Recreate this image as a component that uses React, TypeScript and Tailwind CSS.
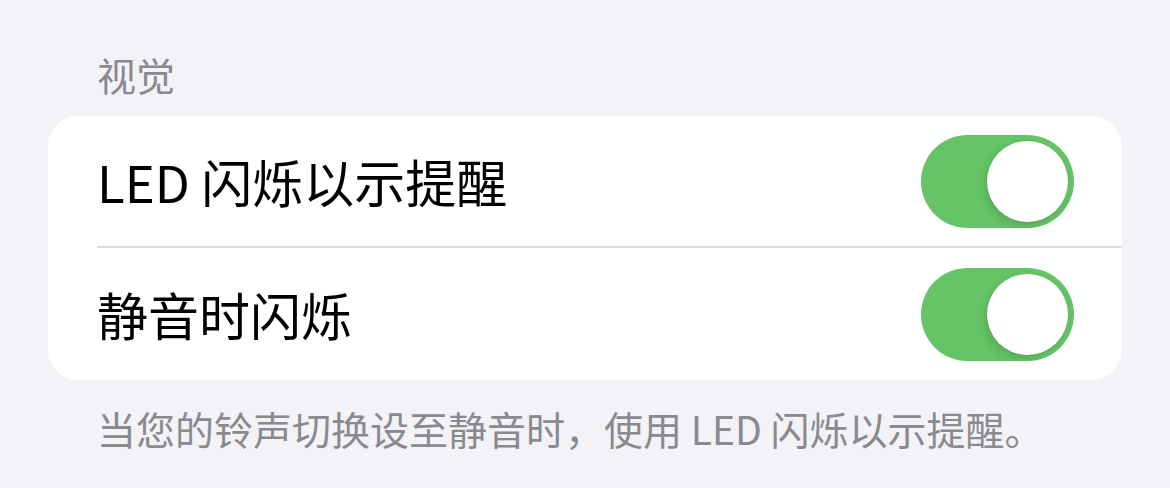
const font = { fontFamily: '"Noto Sans CJK SC", "Noto Sans", sans-serif' }

function Toggle({ on }: { on: boolean }) {
  return (
    <div
      className={`flex h-[93px] w-[153px] shrink-0 items-center rounded-full p-[6px] ${
        on ? 'justify-end bg-[#65c466]' : 'justify-start bg-[#e9e9eb]'
      }`}
    >
      <div className="h-[81px] w-[81px] rounded-full bg-white shadow-[-3px_4px_10px_rgba(0,0,0,0.12),0_1px_2px_rgba(0,0,0,0.06)]" />
    </div>
  )
}

function Row({ label, last }: { label: string; last?: boolean }) {
  return (
    <div className="flex h-[132px] items-center pl-[49px]">
      <div
        className={`flex h-full flex-1 items-center justify-between pr-[48px] ${
          last ? '' : 'border-b-[2px] border-[#dcdcde]'
        }`}
      >
        <span className="text-[51px] leading-none text-black">{label}</span>
        <Toggle on />
      </div>
    </div>
  )
}

export default function App() {
  return (
    <div className="min-h-[488px] w-[1170px] bg-[#f2f2f7] pt-[53px]" style={font}>
      <div className="px-[97px] pb-[21px] text-[39px] leading-[42px] text-[#8a8a8e]">视觉</div>
      <div className="mx-[48px] overflow-hidden rounded-[30px] bg-white">
        <Row label="LED 闪烁以示提醒" />
        <Row label="静音时闪烁" last />
      </div>
      <div className="px-[97px] pt-[22px] text-[39px] leading-[52px] text-[#8a8a8e]">
        当您的铃声切换设至静音时，使用 LED 闪烁以示提醒。
      </div>
    </div>
  )
}
